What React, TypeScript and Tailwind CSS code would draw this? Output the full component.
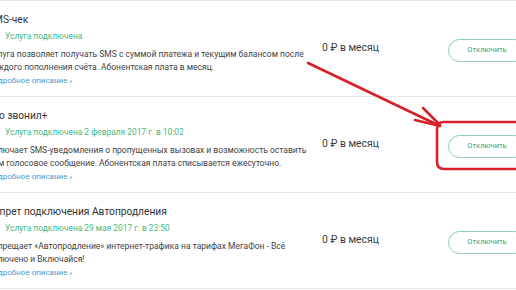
const services = [
  {
    title: "SMS-чек",
    status: "Услуга подключена",
    lines: [
      "Услуга позволяет получать SMS с суммой платежа и текущим балансом после",
      "каждого пополнения счёта. Абонентская плата в месяц.",
    ],
  },
  {
    title: "Кто звонил+",
    status: "Услуга подключена 2 февраля 2017 г. в 10:02",
    lines: [
      "Включает SMS-уведомления о пропущенных вызовах и возможность оставить",
      "Вам голосовое сообщение. Абонентская плата списывается ежесуточно.",
    ],
  },
  {
    title: "Запрет подключения Автопродления",
    status: "Услуга подключена 29 мая 2017 г. в 23:50",
    lines: [
      "Запрещает «Автопродление» интернет-трафика на тарифах МегаФон - Всё",
      "включено и Включайся!",
    ],
  },
];

function CheckIcon() {
  return (
    <svg width="9" height="9" viewBox="0 0 12 12" fill="none" aria-hidden="true" className="flex-shrink-0">
      <path d="M2 6.5l2.5 2.5L10 3.5" stroke="#00b956" strokeWidth="1.6" strokeLinecap="round" strokeLinejoin="round" />
    </svg>
  );
}

function ServiceRow({ title, status, lines }: { title: string; status: string; lines: string[] }) {
  return (
    <div className="grid h-[96px] grid-cols-[332px_128px_1fr] items-center border-t border-[#e8e8e8]">
      {/* Text */}
      <div className="flex h-full flex-col pt-[11px]">
        <h3 className="whitespace-nowrap text-[10.2px] leading-[16px] text-[#333333]">{title}</h3>
        <div className="mt-[2px] flex items-center gap-[8px] text-[8.4px] leading-[12px] text-[#45b97f]">
          <CheckIcon />
          <span className="whitespace-nowrap">{status}</span>
        </div>
        <p className="mt-[6px] text-[8.5px] leading-[13px] text-[#444444]">
          {lines.map((l) => (
            <span key={l} className="block whitespace-nowrap">
              {l}
            </span>
          ))}
        </p>
        <a className="mt-[1px] whitespace-nowrap text-[8px] leading-[12px] text-[#4a98d3]">
          Подробное описание <span className="font-bold">›</span>
        </a>
      </div>

      {/* Price */}
      <div className="-mt-[2px] whitespace-nowrap pl-[2px] text-[10.4px] text-[#3d3d3d]">0 ₽ в месяц</div>

      {/* Action */}
      <div>
        <button
          type="button"
          className="h-[23px] w-[78px] rounded-full border border-[#8fcfae] bg-white text-[7.5px] text-[#3f9a6c]"
        >
          Отключить
        </button>
      </div>
    </div>
  );
}

export default function App() {
  return (
    <div className="relative h-[290px] w-[516px] overflow-hidden bg-white font-[Roboto,Arial,sans-serif]">
      <div className="-ml-[12px] w-[540px]">
        {services.map((s) => (
          <ServiceRow key={s.title} {...s} />
        ))}
        <div className="border-t border-[#e8e8e8]" />
      </div>

      {/* red annotation */}
      <svg
        className="pointer-events-none absolute left-0 top-0"
        width="516"
        height="290"
        viewBox="0 0 516 290"
        fill="none"
        aria-hidden="true"
      >
        <g stroke="#d7202a" strokeWidth="2.6" strokeLinecap="round" strokeLinejoin="round">
          <path d="M308 63 L440 126" />
          <path d="M423 108 L440 125" />
          <path d="M415 120 L440 126" />
          <path d="M522 122 L444 122 Q437 122 437 129 L437 162 Q437 169 444 169 L522 169" />
        </g>
      </svg>
    </div>
  );
}
